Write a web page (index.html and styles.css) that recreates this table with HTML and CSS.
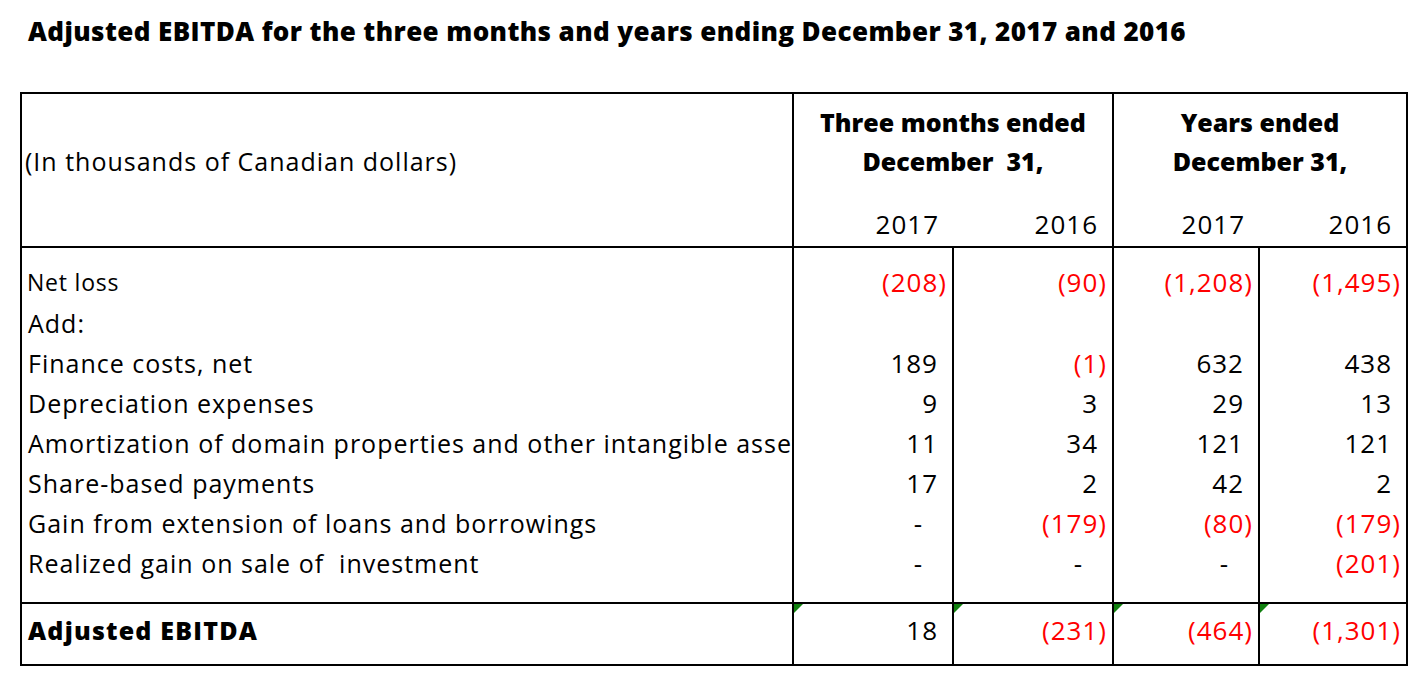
FILE: index.html
```html
<!DOCTYPE html>
<html lang="en">
<head>
<meta charset="utf-8">
<title>Adjusted EBITDA</title>
<link rel="stylesheet" href="styles.css">
</head>
<body>
<div class="page">
  <h1 class="title">Adjusted EBITDA for the three months and years ending December 31, 2017 and 2016</h1>
  <table class="ebitda">
    <colgroup>
      <col class="c-label">
      <col class="c-q17">
      <col class="c-q16">
      <col class="c-y17">
      <col class="c-y16">
    </colgroup>
    <thead>
      <tr>
        <th rowspan="2" class="units">(In thousands of Canadian dollars)</th>
        <th colspan="2" class="group">Three months ended<br>December&nbsp; 31,</th>
        <th colspan="2" class="group">Years ended<br>December 31,</th>
      </tr>
      <tr>
        <th class="year y1">2017</th>
        <th class="year">2016</th>
        <th class="year y3">2017</th>
        <th class="year y4">2016</th>
      </tr>
    </thead>
    <tbody>
      <tr class="first">
        <td class="label small">Net loss</td>
        <td class="num neg">(208)</td>
        <td class="num neg">(90)</td>
        <td class="num neg">(1,208)</td>
        <td class="num neg">(1,495)</td>
      </tr>
      <tr>
        <td class="label">Add:</td>
        <td class="num"></td>
        <td class="num"></td>
        <td class="num"></td>
        <td class="num"></td>
      </tr>
      <tr>
        <td class="label">Finance costs, net</td>
        <td class="num pos">189</td>
        <td class="num neg">(1)</td>
        <td class="num pos">632</td>
        <td class="num pos">438</td>
      </tr>
      <tr>
        <td class="label">Depreciation expenses</td>
        <td class="num pos">9</td>
        <td class="num pos">3</td>
        <td class="num pos">29</td>
        <td class="num pos">13</td>
      </tr>
      <tr>
        <td class="label">Amortization of domain properties and other intangible assets</td>
        <td class="num pos">11</td>
        <td class="num pos">34</td>
        <td class="num pos">121</td>
        <td class="num pos">121</td>
      </tr>
      <tr>
        <td class="label">Share-based payments</td>
        <td class="num pos">17</td>
        <td class="num pos">2</td>
        <td class="num pos">42</td>
        <td class="num pos">2</td>
      </tr>
      <tr>
        <td class="label">Gain from extension of loans and borrowings</td>
        <td class="num dash">-</td>
        <td class="num neg">(179)</td>
        <td class="num neg">(80)</td>
        <td class="num neg">(179)</td>
      </tr>
      <tr class="last">
        <td class="label">Realized gain on sale of &nbsp;investment</td>
        <td class="num dash">-</td>
        <td class="num dash">-</td>
        <td class="num dash">-</td>
        <td class="num neg">(201)</td>
      </tr>
    </tbody>
    <tfoot>
      <tr>
        <td class="label total-label">Adjusted EBITDA</td>
        <td class="num pos flag">18</td>
        <td class="num neg flag">(231)</td>
        <td class="num neg flag">(464)</td>
        <td class="num neg flag">(1,301)</td>
      </tr>
    </tfoot>
  </table>
</div>
</body>
</html>
```

FILE: styles.css
```css
* { box-sizing: border-box; }

html, body {
  margin: 0;
  padding: 0;
  background: #ffffff;
}

body {
  font-family: "Open Sans", "Lato", "Liberation Sans", sans-serif;
  color: #000000;
}

.page {
  padding: 15px 0 0 20px;
}

.title {
  margin: 0 0 45px 8px;
  font-size: 26px;
  line-height: 32px;
  font-weight: 800;
  letter-spacing: 0.4px;
  white-space: nowrap;
}

.ebitda {
  border-collapse: collapse;
  table-layout: fixed;
  width: 1386px;
  border: 2px solid #000;
}

.c-label { width: 772px; }
.c-q17 { width: 160px; }
.c-q16 { width: 160px; }
.c-y17 { width: 146px; }
.c-y16 { width: 148px; }

thead th {
  font-weight: 400;
  padding: 0;
  border-left: 2px solid #000;
}

thead tr:last-child th {
  border-left: none;
}

thead tr:last-child th.y1,
thead tr:last-child th.y3 {
  border-left: 2px solid #000;
}

.units {
  text-align: left;
  font-size: 25px;
  letter-spacing: 1px;
  padding: 0 0 19px 3px !important;
  vertical-align: middle;
  border-left: none !important;
  border-bottom: 2px solid #000;
}

.group {
  font-weight: 800 !important;
  font-size: 25px;
  line-height: 39px;
  text-align: center;
  vertical-align: top;
  padding-top: 9px !important;
  height: 100px;
}

.year {
  font-size: 26px;
  letter-spacing: 1px;
  text-align: right;
  height: 53px;
  line-height: 36px;
  vertical-align: top;
  padding: 13px 14px 4px 0 !important;
  border-bottom: 2px solid #000;
}

tbody td,
tfoot td {
  border-left: 2px solid #000;
  padding: 0;
  height: 40px;
  line-height: 40px;
  font-size: 25px;
  letter-spacing: 1px;
  white-space: nowrap;
}

tbody tr.first td {
  padding-top: 13px;
  height: 56px;
}

tbody tr.last td {
  padding-bottom: 19px;
  height: 59px;
}

.label {
  border-left: none !important;
  padding-left: 6px !important;
  overflow: hidden;
  text-overflow: clip;
}

.label.small {
  font-size: 23px;
  letter-spacing: 0.8px;
  padding-left: 5px !important;
}

.num {
  text-align: right;
  font-size: 26px !important;
  padding-right: 5px !important;
}

.num.neg { color: #ff0000; }
.num.pos { padding-right: 14px !important; }
.num.dash { padding-right: 29px !important; }

tfoot td {
  border-top: 2px solid #000;
  height: 62px;
  line-height: 28px;
  vertical-align: top;
  padding-top: 12px !important;
  position: relative;
}

.total-label {
  font-weight: 800;
  font-size: 25px;
  letter-spacing: 1.2px;
}

.flag::before {
  content: "";
  position: absolute;
  top: 0;
  left: 0;
  width: 0;
  height: 0;
  border-top: 9px solid #11800f;
  border-right: 9px solid transparent;
}
```
